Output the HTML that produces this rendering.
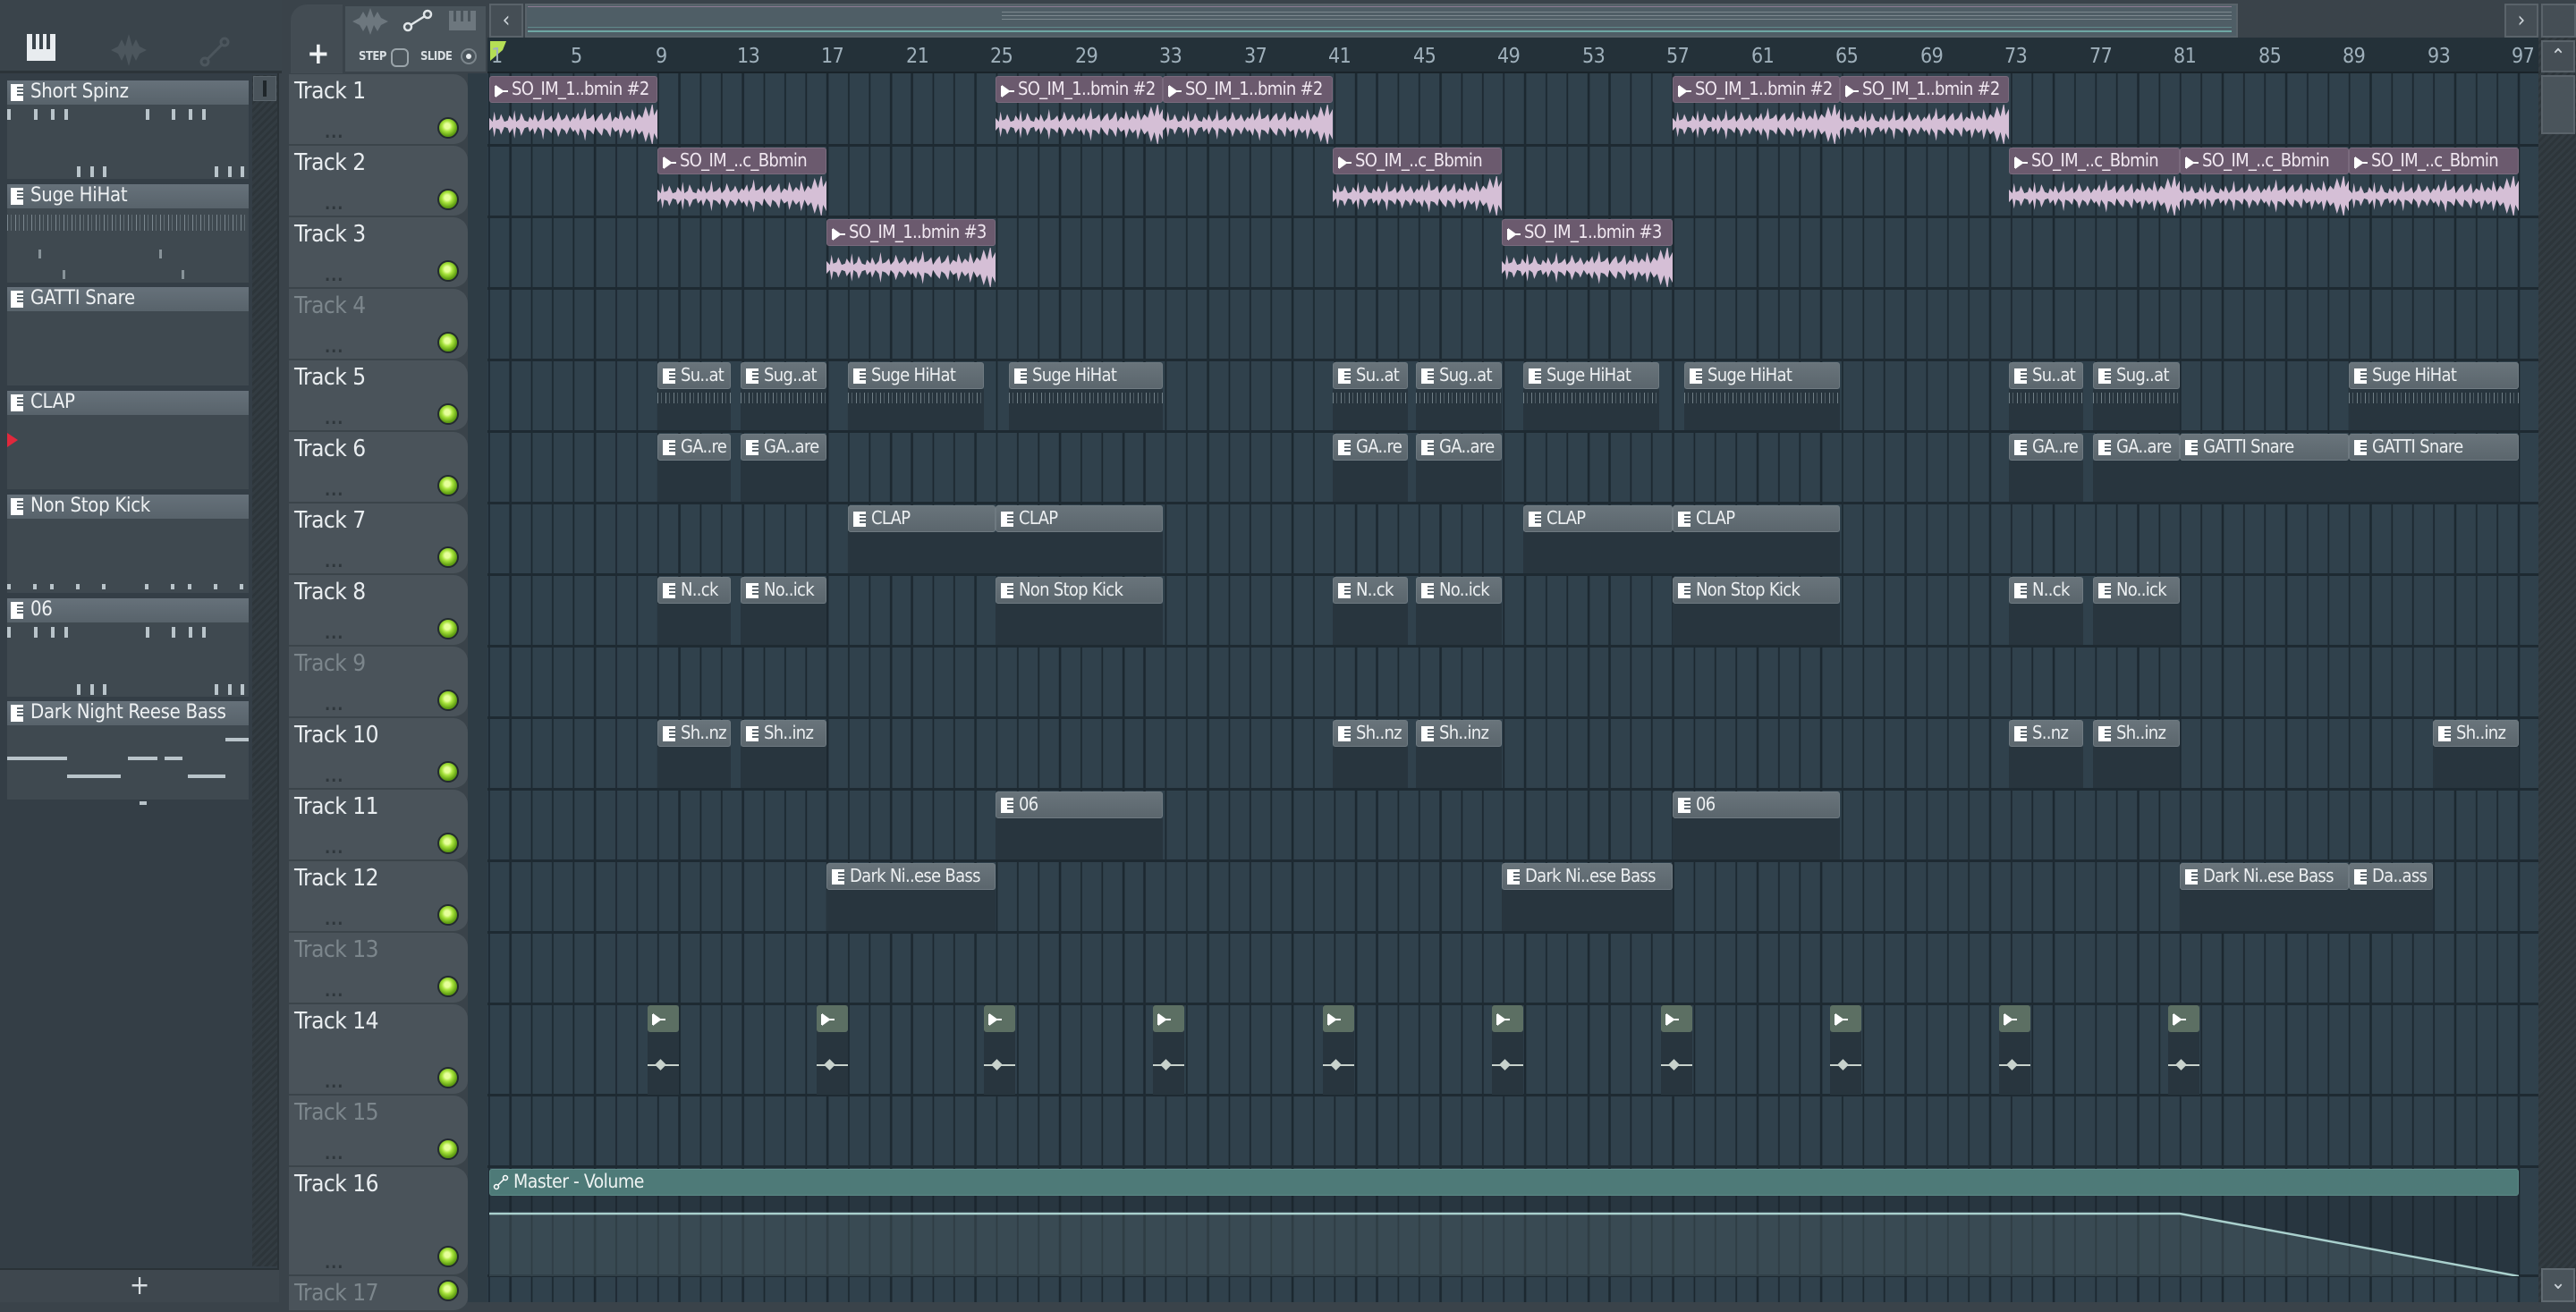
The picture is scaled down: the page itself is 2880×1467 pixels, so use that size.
<!DOCTYPE html>
<html><head><meta charset="utf-8"><style>
*{margin:0;padding:0;box-sizing:border-box}
body{width:2880px;height:1456px;overflow:hidden;background:#3a434a;font-family:"DejaVu Sans Condensed","Liberation Sans Narrow","Liberation Sans",sans-serif;position:relative;color:#e6ebee}
.a{position:absolute}
#grid{position:absolute;left:545px;top:82px;width:2293px;height:1374px;background-color:#30414c;
background-image:repeating-linear-gradient(90deg,#1c2830 0 2px,transparent 2px 23.635px);background-position:1px 0}
.sep{position:absolute;left:545px;width:2293px;height:3px;background:#1e2a32}
.th{position:absolute;left:323px;width:200px;background:#4a535a;border-radius:0 16px 16px 0;border-bottom:2px solid #3b444a}
.th .n{position:absolute;left:6px;top:4px;font-size:26px;color:#e9edf0;white-space:nowrap;letter-spacing:-0.5px}
.th.m .n{color:#7c868c}
.th .d{position:absolute;left:40px;bottom:2px;font-size:18px;color:#2f373c;letter-spacing:1px;font-weight:bold}
.led{position:absolute;left:166px;width:24px;height:24px;border-radius:50%;background:radial-gradient(circle at 45% 40%,#e6ff9a 0 3px,#a6e23a 6px,#5f9d12 11px);border:2px solid #232b2f}
.c{position:absolute;height:76px}
.ah,.ph{letter-spacing:-0.7px}
.ah{position:absolute;left:0;right:0;top:0;height:30px;background:#6b5a6e;border:1px solid #7a6a7d;border-radius:3px;font-size:20px;color:#f1e8f1;white-space:nowrap;overflow:hidden;padding-left:24px;line-height:27px}
.ab{position:absolute;left:0;right:0;top:32px;height:44px}
.ph{position:absolute;left:0;right:0;top:0;height:30px;background:linear-gradient(#69747b,#5b666d);border:1px solid #6f7a81;border-radius:3px;font-size:20px;color:#eceff1;white-space:nowrap;overflow:hidden;padding-left:25px;line-height:27px}
.pb{position:absolute;left:0;right:0;top:30px;bottom:0;background:#28353e}
.hh{position:absolute;left:0;right:0;top:4px;height:12px;background:repeating-linear-gradient(90deg,rgba(170,185,192,.55) 0 1px,transparent 1px 4px,rgba(170,185,192,.3) 4px 5px,transparent 5px 9px)}
.ic{position:absolute;left:5px;top:6px;width:14px;height:17px;background:#fff}
.ic:before{content:"";position:absolute;right:0;top:3px;width:7px;height:2px;background:#5b666d;box-shadow:0 4px 0 #5b666d,0 8px 0 #5b666d}
.ai{position:absolute;left:5px;top:8px}
.tk{position:absolute;height:6px;width:3px;background:#b9c4ca}
.rl{position:absolute;top:50px;font-size:23px;color:#9fb0bb;letter-spacing:-0.5px}
.ch{position:absolute;left:8px;width:270px;height:110px;background:#3f4950}
.chh{position:absolute;left:0;right:0;top:0;height:27px;background:linear-gradient(#66717a,#58636b);font-size:22px;padding-left:26px;line-height:26px;color:#eef1f3;white-space:nowrap;letter-spacing:-0.3px}
.chh i{position:absolute;left:4px;top:4px;width:14px;height:19px;background:#fff}
.chh i:before{content:"";position:absolute;right:0;top:3px;width:7px;height:2px;background:#5b666d;box-shadow:0 4px 0 #5b666d,0 8px 0 #5b666d}
.auto{position:absolute;width:35px;height:100px}
</style></head><body>
<svg width="0" height="0" style="position:absolute"><defs>
<g id="wf" transform="translate(0,20) scale(1,1.3) translate(0,-20)"><path d="M0,20 L0,15 L2,18 L3,10 L4,17 L6,16 L7,12 L9,18 L11,17 L12,13 L14,17 L15,9 L16,18 L18,16 L19,11 L21,17 L23,18 L24,14 L26,17 L27,12 L29,18 L31,15 L32,8 L33,17 L35,16 L37,13 L38,18 L40,15 L41,10 L43,17 L45,15 L46,12 L48,18 L50,14 L51,16 L53,11 L54,17 L56,13 L57,7 L58,16 L60,15 L62,12 L63,18 L65,14 L67,11 L68,17 L70,15 L72,10 L73,18 L75,14 L77,16 L78,9 L80,17 L82,13 L84,16 L85,8 L87,17 L89,12 L91,15 L93,6 L95,14 L97,3 L98,13 L100,8 L100,32 L98,27 L97,37 L95,26 L93,34 L91,25 L89,28 L87,23 L85,32 L84,24 L82,27 L80,23 L78,31 L77,24 L75,26 L73,22 L72,30 L70,25 L68,23 L67,29 L65,26 L63,22 L62,28 L60,25 L58,24 L57,33 L56,27 L54,23 L53,29 L51,24 L50,26 L48,22 L46,28 L45,25 L43,23 L41,30 L40,25 L38,22 L37,27 L35,24 L33,23 L32,32 L31,25 L29,22 L27,28 L26,23 L24,26 L23,22 L21,23 L19,29 L18,24 L16,22 L15,31 L14,23 L12,27 L11,23 L9,22 L7,28 L6,24 L4,23 L3,30 L2,22 L0,25 Z" fill="#d5bfd6"/></g>
<g id="ar"><path d="M0,2 L0,14 M2,3 L9,8 L2,13 Z M9,8 L15,8" stroke="#fff" stroke-width="2" fill="#fff"/></g>
</defs></svg>

<!-- top left panel header -->
<div class="a" style="left:0;top:0;width:315px;height:82px;background:#3a444b;border-bottom:3px solid #2c3439"></div>
<svg class="a" style="left:30px;top:38px" width="36" height="30"><rect x="0" y="0" width="32" height="30" fill="#e8ecef"/><rect x="6" y="0" width="4" height="17" fill="#3a444b"/><rect x="14" y="0" width="4" height="17" fill="#3a444b"/><rect x="22" y="0" width="4" height="17" fill="#3a444b"/></svg>
<svg class="a" style="left:122px;top:38px" width="44" height="36"><path d="M2,18 L10,14 L14,6 L18,14 L22,0 L26,14 L30,6 L34,14 L42,18 L34,22 L30,30 L26,22 L22,36 L18,22 L14,30 L10,22 Z" fill="#4c565d"/></svg>
<svg class="a" style="left:222px;top:40px" width="36" height="36"><circle cx="7" cy="29" r="4" stroke="#4c565d" stroke-width="3" fill="none"/><circle cx="29" cy="7" r="4" stroke="#4c565d" stroke-width="3" fill="none"/><path d="M10,26 L26,10" stroke="#4c565d" stroke-width="3"/></svg>
<!-- left list -->
<div class="a" style="left:0;top:82px;width:312px;height:1336px;background:#343e46;border-right:2px solid #2a3237"></div>
<div class="a" style="left:282px;top:84px;width:28px;height:1332px;background:repeating-linear-gradient(135deg,#333c42 0 3px,#2d353a 3px 6px)"></div>
<div class="a" style="left:283px;top:85px;width:26px;height:28px;background:#4a545b;border:1px solid #5a646b"><div class="a" style="left:10px;top:4px;width:4px;height:18px;background:#1f262a"></div></div>
<div class="a" style="left:0;top:1418px;width:312px;height:38px;background:#3e474e;border-top:2px solid #2a3237;text-align:center;font-size:30px;line-height:36px;color:#d7dde1">+</div>
<div class="a" style="left:312px;top:82px;width:11px;height:1374px;background:#3a434a"></div>

<div class="ch" style="top:90px"><div class="chh"><i></i>Short Spinz</div>
<div class="tk" style="left:0;top:32px;height:12px;width:4px"></div><div class="tk" style="left:30px;top:32px;height:12px;width:4px"></div><div class="tk" style="left:49px;top:32px;height:12px;width:4px"></div><div class="tk" style="left:64px;top:32px;height:12px;width:4px"></div><div class="tk" style="left:155px;top:32px;height:12px;width:4px"></div><div class="tk" style="left:184px;top:32px;height:12px;width:4px"></div><div class="tk" style="left:203px;top:32px;height:12px;width:4px"></div><div class="tk" style="left:218px;top:32px;height:12px;width:4px"></div>
<div class="tk" style="left:78px;top:96px;height:12px;width:4px"></div><div class="tk" style="left:93px;top:96px;height:12px;width:4px"></div><div class="tk" style="left:107px;top:96px;height:12px;width:4px"></div><div class="tk" style="left:232px;top:96px;height:12px;width:4px"></div><div class="tk" style="left:247px;top:96px;height:12px;width:4px"></div><div class="tk" style="left:261px;top:96px;height:12px;width:4px"></div></div>
<div class="ch" style="top:206px"><div class="chh"><i></i>Suge HiHat</div><div class="hh" style="top:34px;height:18px"></div>
<div class="tk" style="left:35px;top:73px;height:10px;width:3px;opacity:.6"></div><div class="tk" style="left:170px;top:73px;height:10px;width:3px;opacity:.6"></div><div class="tk" style="left:62px;top:96px;height:10px;width:3px;opacity:.6"></div><div class="tk" style="left:195px;top:96px;height:10px;width:3px;opacity:.6"></div></div>
<div class="ch" style="top:321px"><div class="chh"><i></i>GATTI Snare</div></div>
<div class="ch" style="top:437px"><div class="chh"><i></i>CLAP</div></div>
<div class="a" style="left:8px;top:484px;width:0;height:0;border-top:8px solid transparent;border-bottom:8px solid transparent;border-left:12px solid #e0283c"></div>
<div class="ch" style="top:553px"><div class="chh"><i></i>Non Stop Kick</div>
<div class="tk" style="left:0;top:100px;width:4px"></div><div class="tk" style="left:29px;top:100px;width:4px"></div><div class="tk" style="left:48px;top:100px;width:4px"></div><div class="tk" style="left:77px;top:100px;width:4px"></div><div class="tk" style="left:106px;top:100px;width:4px"></div><div class="tk" style="left:154px;top:100px;width:4px"></div><div class="tk" style="left:183px;top:100px;width:4px"></div><div class="tk" style="left:202px;top:100px;width:4px"></div><div class="tk" style="left:231px;top:100px;width:4px"></div><div class="tk" style="left:260px;top:100px;width:4px"></div></div>
<div class="ch" style="top:669px"><div class="chh"><i></i>06</div>
<div class="tk" style="left:0;top:32px;height:12px;width:4px"></div><div class="tk" style="left:30px;top:32px;height:12px;width:4px"></div><div class="tk" style="left:49px;top:32px;height:12px;width:4px"></div><div class="tk" style="left:64px;top:32px;height:12px;width:4px"></div><div class="tk" style="left:155px;top:32px;height:12px;width:4px"></div><div class="tk" style="left:184px;top:32px;height:12px;width:4px"></div><div class="tk" style="left:203px;top:32px;height:12px;width:4px"></div><div class="tk" style="left:218px;top:32px;height:12px;width:4px"></div>
<div class="tk" style="left:78px;top:96px;height:12px;width:4px"></div><div class="tk" style="left:93px;top:96px;height:12px;width:4px"></div><div class="tk" style="left:107px;top:96px;height:12px;width:4px"></div><div class="tk" style="left:232px;top:96px;height:12px;width:4px"></div><div class="tk" style="left:247px;top:96px;height:12px;width:4px"></div><div class="tk" style="left:261px;top:96px;height:12px;width:4px"></div></div>
<div class="ch" style="top:784px"><div class="chh"><i></i>Dark Night Reese Bass</div>
<div class="tk" style="left:0;top:62px;height:4px;width:67px"></div><div class="tk" style="left:67px;top:82px;height:4px;width:60px"></div><div class="tk" style="left:135px;top:62px;height:4px;width:33px"></div><div class="tk" style="left:176px;top:62px;height:4px;width:20px"></div><div class="tk" style="left:202px;top:82px;height:4px;width:42px"></div><div class="tk" style="left:244px;top:41px;height:4px;width:26px"></div><div class="tk" style="left:148px;top:112px;height:4px;width:8px"></div></div>

<!-- toolbar -->
<div class="a" style="left:323px;top:0;width:2557px;height:42px;background:#3a434a"></div>
<div class="a" style="left:325px;top:5px;width:58px;height:77px;background:#434c53;border-radius:18px 0 0 0"></div>
<div class="a" style="left:343px;top:40px;font-size:34px;color:#eef1f3;font-weight:bold">+</div>
<div class="a" style="left:384px;top:5px;width:161px;height:77px;background:#4a545b;border:2px solid #3a434a"></div>
<svg class="a" style="left:392px;top:9px" width="44" height="30"><path d="M2,15 L10,11 L14,4 L18,11 L22,0 L26,11 L30,4 L34,11 L42,15 L34,19 L30,26 L26,19 L22,30 L18,19 L14,26 L10,19 Z" fill="#6d777e"/></svg>
<svg class="a" style="left:450px;top:10px" width="34" height="26"><circle cx="6" cy="20" r="4" stroke="#e0e5e8" stroke-width="2.5" fill="none"/><circle cx="28" cy="6" r="4" stroke="#e0e5e8" stroke-width="2.5" fill="none"/><path d="M9,18 L25,8" stroke="#e0e5e8" stroke-width="2.5"/></svg>
<svg class="a" style="left:502px;top:12px" width="32" height="24"><rect width="30" height="22" fill="#6d777e"/><rect x="5" y="0" width="3" height="12" fill="#4a545b"/><rect x="13" y="0" width="3" height="12" fill="#4a545b"/><rect x="21" y="0" width="3" height="12" fill="#4a545b"/></svg>
<div class="a" style="left:401px;top:56px;font-size:13px;color:#d8dee2;font-weight:bold;letter-spacing:-0.5px">STEP</div>
<div class="a" style="left:437px;top:54px;width:20px;height:21px;border:2px solid #9aa4aa;border-radius:6px"></div>
<div class="a" style="left:470px;top:56px;font-size:13px;color:#d8dee2;font-weight:bold;letter-spacing:-0.5px">SLIDE</div>
<div class="a" style="left:515px;top:54px;width:18px;height:18px;border:2px solid #7c868c;border-radius:50%"><div class="a" style="left:4px;top:4px;width:6px;height:6px;border-radius:50%;background:#e8ecef"></div></div>
<!-- overview -->
<div class="a" style="left:547px;top:4px;width:38px;height:38px;background:#454e55;border:2px solid #5a636a;color:#cfd6db;font-size:24px;text-align:center;line-height:32px">&#8249;</div>
<div class="a" style="left:587px;top:4px;width:1915px;height:38px;background:#4f5e66;border:2px solid #59636a"></div>
<div class="a" style="left:590px;top:34px;width:1905px;height:2px;background:#6ea7a4"></div>
<div class="a" style="left:590px;top:30px;width:1905px;height:1px;background:#6ea7a4;opacity:.6"></div>
<div class="a" style="left:590px;top:7px;width:1905px;height:1px;background:#8e7b92"></div>
<div class="a" style="left:1120px;top:13px;width:1375px;height:12px;background:repeating-linear-gradient(#8f9aa0 0 1px,transparent 1px 4px);opacity:.7"></div>
<div class="a" style="left:2800px;top:4px;width:38px;height:38px;background:#454e55;border:2px solid #5a636a;color:#cfd6db;font-size:24px;text-align:center;line-height:32px">&#8250;</div>
<div class="a" style="left:2841px;top:4px;width:39px;height:38px;background:#454e55;border:2px solid #5a636a"></div>
<!-- ruler -->
<div class="a" style="left:545px;top:42px;width:2293px;height:40px;background:#243139;border-bottom:2px solid #1a242a"></div>
<svg class="a" style="left:548px;top:46px" width="20" height="24"><path d="M0,0 L18,0 L14,10 L0,22 Z" fill="#b5df55"/></svg>
<div class="rl" style="left:549px">1</div>
<div class="rl" style="left:638px">5</div><div class="rl" style="left:733px">9</div><div class="rl" style="left:824px">13</div><div class="rl" style="left:918px">17</div><div class="rl" style="left:1013px">21</div><div class="rl" style="left:1107px">25</div><div class="rl" style="left:1202px">29</div><div class="rl" style="left:1296px">33</div><div class="rl" style="left:1391px">37</div><div class="rl" style="left:1485px">41</div><div class="rl" style="left:1580px">45</div><div class="rl" style="left:1674px">49</div><div class="rl" style="left:1769px">53</div><div class="rl" style="left:1863px">57</div><div class="rl" style="left:1958px">61</div><div class="rl" style="left:2052px">65</div><div class="rl" style="left:2147px">69</div><div class="rl" style="left:2241px">73</div><div class="rl" style="left:2336px">77</div><div class="rl" style="left:2430px">81</div><div class="rl" style="left:2525px">85</div><div class="rl" style="left:2619px">89</div><div class="rl" style="left:2714px">93</div><div class="rl" style="left:2808px">97</div>
<!-- vertical scrollbar -->
<div class="a" style="left:2838px;top:42px;width:42px;height:1414px;background:repeating-linear-gradient(135deg,#333c42 0 3px,#2d353a 3px 6px)"></div>
<div class="a" style="left:2841px;top:45px;width:38px;height:36px;background:#454e55;border:2px solid #5a636a;color:#cfd6db;font-size:22px;text-align:center;line-height:34px">&#8963;</div>
<div class="a" style="left:2841px;top:84px;width:38px;height:66px;background:#4a545b;border:2px solid #5a636a"></div>
<div class="a" style="left:2841px;top:1418px;width:38px;height:38px;background:#4a545b;border:2px solid #5f6970;color:#cfd6db;font-size:22px;text-align:center;line-height:30px">&#8964;</div>

<!-- grid -->
<div id="grid"></div>
<div class="a" style="left:523px;top:82px;width:22px;height:1374px;background:#2e3c45"></div>
<div class="sep" style="top:161px"></div><div class="sep" style="top:241px"></div><div class="sep" style="top:321px"></div><div class="sep" style="top:401px"></div><div class="sep" style="top:481px"></div><div class="sep" style="top:561px"></div><div class="sep" style="top:641px"></div><div class="sep" style="top:721px"></div><div class="sep" style="top:801px"></div><div class="sep" style="top:881px"></div><div class="sep" style="top:961px"></div><div class="sep" style="top:1041px"></div><div class="sep" style="top:1121px"></div><div class="sep" style="top:1223px"></div><div class="sep" style="top:1303px"></div><div class="sep" style="top:1425px"></div>

<!-- track headers -->
<div class="th" style="top:83px;height:80px"><div class="n">Track 1</div><div class="d">...</div><div class="led" style="top:48px"></div></div>
<div class="th" style="top:163px;height:80px"><div class="n">Track 2</div><div class="d">...</div><div class="led" style="top:48px"></div></div>
<div class="th" style="top:243px;height:80px"><div class="n">Track 3</div><div class="d">...</div><div class="led" style="top:48px"></div></div>
<div class="th m" style="top:323px;height:80px"><div class="n">Track 4</div><div class="d">...</div><div class="led" style="top:48px"></div></div>
<div class="th" style="top:403px;height:80px"><div class="n">Track 5</div><div class="d">...</div><div class="led" style="top:48px"></div></div>
<div class="th" style="top:483px;height:80px"><div class="n">Track 6</div><div class="d">...</div><div class="led" style="top:48px"></div></div>
<div class="th" style="top:563px;height:80px"><div class="n">Track 7</div><div class="d">...</div><div class="led" style="top:48px"></div></div>
<div class="th" style="top:643px;height:80px"><div class="n">Track 8</div><div class="d">...</div><div class="led" style="top:48px"></div></div>
<div class="th m" style="top:723px;height:80px"><div class="n">Track 9</div><div class="d">...</div><div class="led" style="top:48px"></div></div>
<div class="th" style="top:803px;height:80px"><div class="n">Track 10</div><div class="d">...</div><div class="led" style="top:48px"></div></div>
<div class="th" style="top:883px;height:80px"><div class="n">Track 11</div><div class="d">...</div><div class="led" style="top:48px"></div></div>
<div class="th" style="top:963px;height:80px"><div class="n">Track 12</div><div class="d">...</div><div class="led" style="top:48px"></div></div>
<div class="th m" style="top:1043px;height:80px"><div class="n">Track 13</div><div class="d">...</div><div class="led" style="top:48px"></div></div>
<div class="th" style="top:1123px;height:102px"><div class="n">Track 14</div><div class="d">...</div><div class="led" style="top:70px"></div></div>
<div class="th m" style="top:1225px;height:80px"><div class="n">Track 15</div><div class="d">...</div><div class="led" style="top:48px"></div></div>
<div class="th" style="top:1305px;height:122px"><div class="n">Track 16</div><div class="d">...</div><div class="led" style="top:88px"></div></div>
<div class="th m" style="top:1427px;height:40px"><div class="n">Track 17</div><div class="led" style="top:4px"></div></div>

<!-- audio clips -->
<div class="c" style="left:547px;top:85px;width:188px"><div class="ah"><svg class="ai" width="16" height="16"><use href="#ar"/></svg>SO_IM_1..bmin #2</div><svg class="ab" viewBox="0 0 100 40" preserveAspectRatio="none" width="188" height="44"><use href="#wf"/></svg></div>
<div class="c" style="left:1113px;top:85px;width:187px"><div class="ah"><svg class="ai" width="16" height="16"><use href="#ar"/></svg>SO_IM_1..bmin #2</div><svg class="ab" viewBox="0 0 100 40" preserveAspectRatio="none" width="187" height="44"><use href="#wf"/></svg></div>
<div class="c" style="left:1300px;top:85px;width:190px"><div class="ah"><svg class="ai" width="16" height="16"><use href="#ar"/></svg>SO_IM_1..bmin #2</div><svg class="ab" viewBox="0 0 100 40" preserveAspectRatio="none" width="190" height="44"><use href="#wf"/></svg></div>
<div class="c" style="left:1870px;top:85px;width:187px"><div class="ah"><svg class="ai" width="16" height="16"><use href="#ar"/></svg>SO_IM_1..bmin #2</div><svg class="ab" viewBox="0 0 100 40" preserveAspectRatio="none" width="187" height="44"><use href="#wf"/></svg></div>
<div class="c" style="left:2057px;top:85px;width:189px"><div class="ah"><svg class="ai" width="16" height="16"><use href="#ar"/></svg>SO_IM_1..bmin #2</div><svg class="ab" viewBox="0 0 100 40" preserveAspectRatio="none" width="189" height="44"><use href="#wf"/></svg></div>

<div class="c" style="left:735px;top:165px;width:189px"><div class="ah"><svg class="ai" width="16" height="16"><use href="#ar"/></svg>SO_IM_..c_Bbmin</div><svg class="ab" viewBox="0 0 100 40" preserveAspectRatio="none" width="189" height="44"><use href="#wf"/></svg></div>
<div class="c" style="left:1490px;top:165px;width:189px"><div class="ah"><svg class="ai" width="16" height="16"><use href="#ar"/></svg>SO_IM_..c_Bbmin</div><svg class="ab" viewBox="0 0 100 40" preserveAspectRatio="none" width="189" height="44"><use href="#wf"/></svg></div>
<div class="c" style="left:2246px;top:165px;width:191px"><div class="ah"><svg class="ai" width="16" height="16"><use href="#ar"/></svg>SO_IM_..c_Bbmin</div><svg class="ab" viewBox="0 0 100 40" preserveAspectRatio="none" width="191" height="44"><use href="#wf"/></svg></div>
<div class="c" style="left:2437px;top:165px;width:189px"><div class="ah"><svg class="ai" width="16" height="16"><use href="#ar"/></svg>SO_IM_..c_Bbmin</div><svg class="ab" viewBox="0 0 100 40" preserveAspectRatio="none" width="189" height="44"><use href="#wf"/></svg></div>
<div class="c" style="left:2626px;top:165px;width:190px"><div class="ah"><svg class="ai" width="16" height="16"><use href="#ar"/></svg>SO_IM_..c_Bbmin</div><svg class="ab" viewBox="0 0 100 40" preserveAspectRatio="none" width="190" height="44"><use href="#wf"/></svg></div>

<div class="c" style="left:924px;top:245px;width:189px"><div class="ah"><svg class="ai" width="16" height="16"><use href="#ar"/></svg>SO_IM_1..bmin #3</div><svg class="ab" viewBox="0 0 100 40" preserveAspectRatio="none" width="189" height="44"><use href="#wf"/></svg></div>
<div class="c" style="left:1679px;top:245px;width:191px"><div class="ah"><svg class="ai" width="16" height="16"><use href="#ar"/></svg>SO_IM_1..bmin #3</div><svg class="ab" viewBox="0 0 100 40" preserveAspectRatio="none" width="191" height="44"><use href="#wf"/></svg></div>

<!-- Track 5 -->
<div class="c" style="left:735px;top:405px;width:82px"><div class="pb"><div class="hh"></div></div><div class="ph"><div class="ic"></div>Su..at</div></div>
<div class="c" style="left:828px;top:405px;width:96px"><div class="pb"><div class="hh"></div></div><div class="ph"><div class="ic"></div>Sug..at</div></div>
<div class="c" style="left:948px;top:405px;width:152px"><div class="pb"><div class="hh"></div></div><div class="ph"><div class="ic"></div>Suge HiHat</div></div>
<div class="c" style="left:1128px;top:405px;width:172px"><div class="pb"><div class="hh"></div></div><div class="ph"><div class="ic"></div>Suge HiHat</div></div>
<div class="c" style="left:1490px;top:405px;width:84px"><div class="pb"><div class="hh"></div></div><div class="ph"><div class="ic"></div>Su..at</div></div>
<div class="c" style="left:1583px;top:405px;width:96px"><div class="pb"><div class="hh"></div></div><div class="ph"><div class="ic"></div>Sug..at</div></div>
<div class="c" style="left:1703px;top:405px;width:152px"><div class="pb"><div class="hh"></div></div><div class="ph"><div class="ic"></div>Suge HiHat</div></div>
<div class="c" style="left:1883px;top:405px;width:174px"><div class="pb"><div class="hh"></div></div><div class="ph"><div class="ic"></div>Suge HiHat</div></div>
<div class="c" style="left:2246px;top:405px;width:83px"><div class="pb"><div class="hh"></div></div><div class="ph"><div class="ic"></div>Su..at</div></div>
<div class="c" style="left:2340px;top:405px;width:97px"><div class="pb"><div class="hh"></div></div><div class="ph"><div class="ic"></div>Sug..at</div></div>
<div class="c" style="left:2626px;top:405px;width:190px"><div class="pb"><div class="hh"></div></div><div class="ph"><div class="ic"></div>Suge HiHat</div></div>

<!-- Track 6 -->
<div class="c" style="left:735px;top:485px;width:82px"><div class="pb"></div><div class="ph"><div class="ic"></div>GA..re</div></div>
<div class="c" style="left:828px;top:485px;width:96px"><div class="pb"></div><div class="ph"><div class="ic"></div>GA..are</div></div>
<div class="c" style="left:1490px;top:485px;width:84px"><div class="pb"></div><div class="ph"><div class="ic"></div>GA..re</div></div>
<div class="c" style="left:1583px;top:485px;width:96px"><div class="pb"></div><div class="ph"><div class="ic"></div>GA..are</div></div>
<div class="c" style="left:2246px;top:485px;width:83px"><div class="pb"></div><div class="ph"><div class="ic"></div>GA..re</div></div>
<div class="c" style="left:2340px;top:485px;width:97px"><div class="pb"></div><div class="ph"><div class="ic"></div>GA..are</div></div>
<div class="c" style="left:2437px;top:485px;width:189px"><div class="pb"></div><div class="ph"><div class="ic"></div>GATTI Snare</div></div>
<div class="c" style="left:2626px;top:485px;width:190px"><div class="pb"></div><div class="ph"><div class="ic"></div>GATTI Snare</div></div>

<!-- Track 7 -->
<div class="c" style="left:948px;top:565px;width:165px"><div class="pb"></div><div class="ph"><div class="ic"></div>CLAP</div></div>
<div class="c" style="left:1113px;top:565px;width:187px"><div class="pb"></div><div class="ph"><div class="ic"></div>CLAP</div></div>
<div class="c" style="left:1703px;top:565px;width:167px"><div class="pb"></div><div class="ph"><div class="ic"></div>CLAP</div></div>
<div class="c" style="left:1870px;top:565px;width:187px"><div class="pb"></div><div class="ph"><div class="ic"></div>CLAP</div></div>

<!-- Track 8 -->
<div class="c" style="left:735px;top:645px;width:82px"><div class="pb"></div><div class="ph"><div class="ic"></div>N..ck</div></div>
<div class="c" style="left:828px;top:645px;width:96px"><div class="pb"></div><div class="ph"><div class="ic"></div>No..ick</div></div>
<div class="c" style="left:1113px;top:645px;width:187px"><div class="pb"></div><div class="ph"><div class="ic"></div>Non Stop Kick</div></div>
<div class="c" style="left:1490px;top:645px;width:84px"><div class="pb"></div><div class="ph"><div class="ic"></div>N..ck</div></div>
<div class="c" style="left:1583px;top:645px;width:96px"><div class="pb"></div><div class="ph"><div class="ic"></div>No..ick</div></div>
<div class="c" style="left:1870px;top:645px;width:187px"><div class="pb"></div><div class="ph"><div class="ic"></div>Non Stop Kick</div></div>
<div class="c" style="left:2246px;top:645px;width:83px"><div class="pb"></div><div class="ph"><div class="ic"></div>N..ck</div></div>
<div class="c" style="left:2340px;top:645px;width:97px"><div class="pb"></div><div class="ph"><div class="ic"></div>No..ick</div></div>

<!-- Track 10 -->
<div class="c" style="left:735px;top:805px;width:82px"><div class="pb"></div><div class="ph"><div class="ic"></div>Sh..nz</div></div>
<div class="c" style="left:828px;top:805px;width:96px"><div class="pb"></div><div class="ph"><div class="ic"></div>Sh..inz</div></div>
<div class="c" style="left:1490px;top:805px;width:84px"><div class="pb"></div><div class="ph"><div class="ic"></div>Sh..nz</div></div>
<div class="c" style="left:1583px;top:805px;width:96px"><div class="pb"></div><div class="ph"><div class="ic"></div>Sh..inz</div></div>
<div class="c" style="left:2246px;top:805px;width:83px"><div class="pb"></div><div class="ph"><div class="ic"></div>S..nz</div></div>
<div class="c" style="left:2340px;top:805px;width:97px"><div class="pb"></div><div class="ph"><div class="ic"></div>Sh..inz</div></div>
<div class="c" style="left:2720px;top:805px;width:96px"><div class="pb"></div><div class="ph"><div class="ic"></div>Sh..inz</div></div>

<!-- Track 11 -->
<div class="c" style="left:1113px;top:885px;width:187px"><div class="pb"></div><div class="ph"><div class="ic"></div>06</div></div>
<div class="c" style="left:1870px;top:885px;width:187px"><div class="pb"></div><div class="ph"><div class="ic"></div>06</div></div>

<!-- Track 12 -->
<div class="c" style="left:924px;top:965px;width:189px"><div class="pb"></div><div class="ph"><div class="ic"></div>Dark Ni..ese Bass</div></div>
<div class="c" style="left:1679px;top:965px;width:191px"><div class="pb"></div><div class="ph"><div class="ic"></div>Dark Ni..ese Bass</div></div>
<div class="c" style="left:2437px;top:965px;width:189px"><div class="pb"></div><div class="ph"><div class="ic"></div>Dark Ni..ese Bass</div></div>
<div class="c" style="left:2626px;top:965px;width:94px"><div class="pb"></div><div class="ph"><div class="ic"></div>Da..ass</div></div>

<!-- Track 14 auto clips -->
<div class="auto" style="left:724px;top:1124px"><div class="pb" style="top:0"></div><div class="a" style="left:0;top:0;width:35px;height:30px;background:#5c6f63;border-radius:3px"><svg class="ai" width="16" height="16"><use href="#ar"/></svg></div><div class="a" style="left:0;top:66px;width:35px;height:2px;background:#c8d2cc"></div><div class="a" style="left:10px;top:62px;width:9px;height:9px;background:#c8d2cc;transform:rotate(45deg)"></div></div>
<div class="auto" style="left:913px;top:1124px"><div class="pb" style="top:0"></div><div class="a" style="left:0;top:0;width:35px;height:30px;background:#5c6f63;border-radius:3px"><svg class="ai" width="16" height="16"><use href="#ar"/></svg></div><div class="a" style="left:0;top:66px;width:35px;height:2px;background:#c8d2cc"></div><div class="a" style="left:10px;top:62px;width:9px;height:9px;background:#c8d2cc;transform:rotate(45deg)"></div></div>
<div class="auto" style="left:1100px;top:1124px"><div class="pb" style="top:0"></div><div class="a" style="left:0;top:0;width:35px;height:30px;background:#5c6f63;border-radius:3px"><svg class="ai" width="16" height="16"><use href="#ar"/></svg></div><div class="a" style="left:0;top:66px;width:35px;height:2px;background:#c8d2cc"></div><div class="a" style="left:10px;top:62px;width:9px;height:9px;background:#c8d2cc;transform:rotate(45deg)"></div></div>
<div class="auto" style="left:1289px;top:1124px"><div class="pb" style="top:0"></div><div class="a" style="left:0;top:0;width:35px;height:30px;background:#5c6f63;border-radius:3px"><svg class="ai" width="16" height="16"><use href="#ar"/></svg></div><div class="a" style="left:0;top:66px;width:35px;height:2px;background:#c8d2cc"></div><div class="a" style="left:10px;top:62px;width:9px;height:9px;background:#c8d2cc;transform:rotate(45deg)"></div></div>
<div class="auto" style="left:1479px;top:1124px"><div class="pb" style="top:0"></div><div class="a" style="left:0;top:0;width:35px;height:30px;background:#5c6f63;border-radius:3px"><svg class="ai" width="16" height="16"><use href="#ar"/></svg></div><div class="a" style="left:0;top:66px;width:35px;height:2px;background:#c8d2cc"></div><div class="a" style="left:10px;top:62px;width:9px;height:9px;background:#c8d2cc;transform:rotate(45deg)"></div></div>
<div class="auto" style="left:1668px;top:1124px"><div class="pb" style="top:0"></div><div class="a" style="left:0;top:0;width:35px;height:30px;background:#5c6f63;border-radius:3px"><svg class="ai" width="16" height="16"><use href="#ar"/></svg></div><div class="a" style="left:0;top:66px;width:35px;height:2px;background:#c8d2cc"></div><div class="a" style="left:10px;top:62px;width:9px;height:9px;background:#c8d2cc;transform:rotate(45deg)"></div></div>
<div class="auto" style="left:1857px;top:1124px"><div class="pb" style="top:0"></div><div class="a" style="left:0;top:0;width:35px;height:30px;background:#5c6f63;border-radius:3px"><svg class="ai" width="16" height="16"><use href="#ar"/></svg></div><div class="a" style="left:0;top:66px;width:35px;height:2px;background:#c8d2cc"></div><div class="a" style="left:10px;top:62px;width:9px;height:9px;background:#c8d2cc;transform:rotate(45deg)"></div></div>
<div class="auto" style="left:2046px;top:1124px"><div class="pb" style="top:0"></div><div class="a" style="left:0;top:0;width:35px;height:30px;background:#5c6f63;border-radius:3px"><svg class="ai" width="16" height="16"><use href="#ar"/></svg></div><div class="a" style="left:0;top:66px;width:35px;height:2px;background:#c8d2cc"></div><div class="a" style="left:10px;top:62px;width:9px;height:9px;background:#c8d2cc;transform:rotate(45deg)"></div></div>
<div class="auto" style="left:2235px;top:1124px"><div class="pb" style="top:0"></div><div class="a" style="left:0;top:0;width:35px;height:30px;background:#5c6f63;border-radius:3px"><svg class="ai" width="16" height="16"><use href="#ar"/></svg></div><div class="a" style="left:0;top:66px;width:35px;height:2px;background:#c8d2cc"></div><div class="a" style="left:10px;top:62px;width:9px;height:9px;background:#c8d2cc;transform:rotate(45deg)"></div></div>
<div class="auto" style="left:2424px;top:1124px"><div class="pb" style="top:0"></div><div class="a" style="left:0;top:0;width:35px;height:30px;background:#5c6f63;border-radius:3px"><svg class="ai" width="16" height="16"><use href="#ar"/></svg></div><div class="a" style="left:0;top:66px;width:35px;height:2px;background:#c8d2cc"></div><div class="a" style="left:10px;top:62px;width:9px;height:9px;background:#c8d2cc;transform:rotate(45deg)"></div></div>

<!-- Track 16 automation -->
<div class="a" style="left:547px;top:1337px;width:2269px;height:88px;background:rgba(25,35,42,.35)"></div>
<svg class="a" style="left:547px;top:1337px" width="2269" height="90"><path d="M0,20 L1890,20 L2269,90 L0,90 Z" fill="rgba(120,145,150,.22)"/><path d="M0,20 L1890,20 L2269,90" stroke="#a9d0cd" stroke-width="2.5" fill="none"/></svg>
<div class="a" style="left:547px;top:1307px;width:2269px;height:30px;background:#4e7a78;border:1px solid #5c8986;border-radius:3px;font-size:21px;line-height:27px;padding-left:26px;color:#eef3f2;letter-spacing:-0.5px">
<svg class="a" style="left:3px;top:5px" width="18" height="18"><circle cx="4" cy="14" r="2.5" stroke="#fff" stroke-width="1.5" fill="none"/><circle cx="14" cy="4" r="2.5" stroke="#fff" stroke-width="1.5" fill="none"/><path d="M6,12 L12,6" stroke="#fff" stroke-width="1.5"/></svg>Master - Volume</div>
</body></html>
